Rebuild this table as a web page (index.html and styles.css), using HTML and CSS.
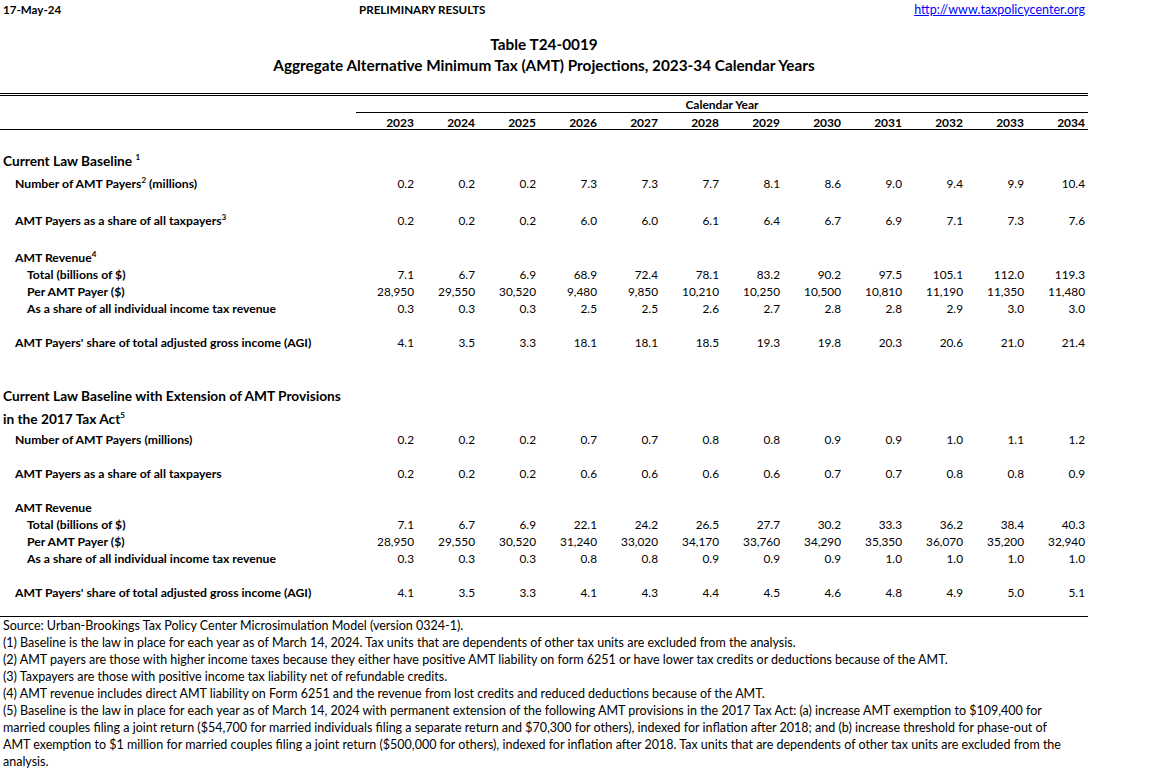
FILE: index.html
```html
<!DOCTYPE html>
<html lang="en">
<head>
<meta charset="utf-8">
<title>Table T24-0019</title>
<link rel="stylesheet" href="styles.css">
</head>
<body>
<div class="page">
  <div class="topbar">
    <div class="tb-date">17-May-24</div>
    <div class="tb-prelim">PRELIMINARY RESULTS</div>
    <a class="tb-url" href="#">http://www.taxpolicycenter.org</a>
  </div>
  <div class="titles">
    <div class="title">Table T24-0019</div>
    <div class="title">Aggregate Alternative Minimum Tax (AMT) Projections, 2023-34 Calendar Years</div>
  </div>

  <div class="thead">
    <div class="row hrow">
      <div class="lab"></div>
      <div class="calyear">Calendar Year</div>
    </div>
    <div class="row hrow years">
      <div class="lab"></div>
      <div class="num">2023</div><div class="num">2024</div><div class="num">2025</div><div class="num">2026</div>
      <div class="num">2027</div><div class="num">2028</div><div class="num">2029</div><div class="num">2030</div>
      <div class="num">2031</div><div class="num">2032</div><div class="num">2033</div><div class="num">2034</div>
    </div>
  </div>

  <div class="tbody">
    <div class="row head1"><div class="lab sec">Current Law Baseline <sup>1</sup></div></div>
    <div class="row drow mt4">
      <div class="lab l1">Number of AMT Payers<sup>2</sup> (millions)</div>
      <div class="num">0.2</div><div class="num">0.2</div><div class="num">0.2</div><div class="num">7.3</div>
      <div class="num">7.3</div><div class="num">7.7</div><div class="num">8.1</div><div class="num">8.6</div>
      <div class="num">9.0</div><div class="num">9.4</div><div class="num">9.9</div><div class="num">10.4</div>
    </div>
    <div class="row drow mt20">
      <div class="lab l1">AMT Payers as a share of all taxpayers<sup>3</sup></div>
      <div class="num">0.2</div><div class="num">0.2</div><div class="num">0.2</div><div class="num">6.0</div>
      <div class="num">6.0</div><div class="num">6.1</div><div class="num">6.4</div><div class="num">6.7</div>
      <div class="num">6.9</div><div class="num">7.1</div><div class="num">7.3</div><div class="num">7.6</div>
    </div>
    <div class="row drow mt20">
      <div class="lab l1">AMT Revenue<sup>4</sup></div>
    </div>
    <div class="row drow">
      <div class="lab l2">Total (billions of $)</div>
      <div class="num">7.1</div><div class="num">6.7</div><div class="num">6.9</div><div class="num">68.9</div>
      <div class="num">72.4</div><div class="num">78.1</div><div class="num">83.2</div><div class="num">90.2</div>
      <div class="num">97.5</div><div class="num">105.1</div><div class="num">112.0</div><div class="num">119.3</div>
    </div>
    <div class="row drow">
      <div class="lab l2">Per AMT Payer ($)</div>
      <div class="num">28,950</div><div class="num">29,550</div><div class="num">30,520</div><div class="num">9,480</div>
      <div class="num">9,850</div><div class="num">10,210</div><div class="num">10,250</div><div class="num">10,500</div>
      <div class="num">10,810</div><div class="num">11,190</div><div class="num">11,350</div><div class="num">11,480</div>
    </div>
    <div class="row drow">
      <div class="lab l2">As a share of all individual income tax revenue</div>
      <div class="num">0.3</div><div class="num">0.3</div><div class="num">0.3</div><div class="num">2.5</div>
      <div class="num">2.5</div><div class="num">2.6</div><div class="num">2.7</div><div class="num">2.8</div>
      <div class="num">2.8</div><div class="num">2.9</div><div class="num">3.0</div><div class="num">3.0</div>
    </div>
    <div class="row drow mt17">
      <div class="lab l1">AMT Payers' share of total adjusted gross income (AGI)</div>
      <div class="num">4.1</div><div class="num">3.5</div><div class="num">3.3</div><div class="num">18.1</div>
      <div class="num">18.1</div><div class="num">18.5</div><div class="num">19.3</div><div class="num">19.8</div>
      <div class="num">20.3</div><div class="num">20.6</div><div class="num">21.0</div><div class="num">21.4</div>
    </div>

    <div class="row head2"><div class="lab sec">Current Law Baseline with Extension of AMT Provisions<br>in the 2017 Tax Act<sup>5</sup></div></div>
    <div class="row drow mt1">
      <div class="lab l1">Number of AMT Payers (millions)</div>
      <div class="num">0.2</div><div class="num">0.2</div><div class="num">0.2</div><div class="num">0.7</div>
      <div class="num">0.7</div><div class="num">0.8</div><div class="num">0.8</div><div class="num">0.9</div>
      <div class="num">0.9</div><div class="num">1.0</div><div class="num">1.1</div><div class="num">1.2</div>
    </div>
    <div class="row drow mt17">
      <div class="lab l1">AMT Payers as a share of all taxpayers</div>
      <div class="num">0.2</div><div class="num">0.2</div><div class="num">0.2</div><div class="num">0.6</div>
      <div class="num">0.6</div><div class="num">0.6</div><div class="num">0.6</div><div class="num">0.7</div>
      <div class="num">0.7</div><div class="num">0.8</div><div class="num">0.8</div><div class="num">0.9</div>
    </div>
    <div class="row drow mt17">
      <div class="lab l1">AMT Revenue</div>
    </div>
    <div class="row drow">
      <div class="lab l2">Total (billions of $)</div>
      <div class="num">7.1</div><div class="num">6.7</div><div class="num">6.9</div><div class="num">22.1</div>
      <div class="num">24.2</div><div class="num">26.5</div><div class="num">27.7</div><div class="num">30.2</div>
      <div class="num">33.3</div><div class="num">36.2</div><div class="num">38.4</div><div class="num">40.3</div>
    </div>
    <div class="row drow">
      <div class="lab l2">Per AMT Payer ($)</div>
      <div class="num">28,950</div><div class="num">29,550</div><div class="num">30,520</div><div class="num">31,240</div>
      <div class="num">33,020</div><div class="num">34,170</div><div class="num">33,760</div><div class="num">34,290</div>
      <div class="num">35,350</div><div class="num">36,070</div><div class="num">35,200</div><div class="num">32,940</div>
    </div>
    <div class="row drow">
      <div class="lab l2">As a share of all individual income tax revenue</div>
      <div class="num">0.3</div><div class="num">0.3</div><div class="num">0.3</div><div class="num">0.8</div>
      <div class="num">0.8</div><div class="num">0.9</div><div class="num">0.9</div><div class="num">0.9</div>
      <div class="num">1.0</div><div class="num">1.0</div><div class="num">1.0</div><div class="num">1.0</div>
    </div>
    <div class="row drow mt17">
      <div class="lab l1">AMT Payers' share of total adjusted gross income (AGI)</div>
      <div class="num">4.1</div><div class="num">3.5</div><div class="num">3.3</div><div class="num">4.1</div>
      <div class="num">4.3</div><div class="num">4.4</div><div class="num">4.5</div><div class="num">4.6</div>
      <div class="num">4.8</div><div class="num">4.9</div><div class="num">5.0</div><div class="num">5.1</div>
    </div>
  </div>

  <div class="notes">
    <p>Source: Urban-Brookings Tax Policy Center Microsimulation Model (version 0324-1).</p>
    <p>(1) Baseline is the law in place for each year as of March 14, 2024. Tax units that are dependents of other tax units are excluded from the analysis.</p>
    <p>(2) AMT payers are those with higher income taxes because they either have positive AMT liability on form 6251 or have lower tax credits or deductions because of the AMT.</p>
    <p>(3) Taxpayers are those with positive income tax liability net of refundable credits.</p>
    <p>(4) AMT revenue includes direct AMT liability on Form 6251 and the revenue from lost credits and reduced deductions because of the AMT.</p>
    <p>(5) Baseline is the law in place for each year as of March 14, 2024 with permanent extension of the following AMT provisions in the 2017 Tax Act: (a) increase AMT exemption to $109,400 for<br>married couples filing a joint return ($54,700 for married individuals filing a separate return and $70,300 for others), indexed for inflation after 2018; and (b) increase threshold for phase-out of<br>AMT exemption to $1 million for married couples filing a joint return ($500,000 for others), indexed for inflation after 2018. Tax units that are dependents of other tax units are excluded from the<br>analysis.</p>
  </div>
</div>
</body>
</html>
```

FILE: styles.css
```css
* { box-sizing: border-box; }
html, body { margin: 0; padding: 0; background: #fff; }
body {
  font-family: Lato, "Open Sans", "Liberation Sans", sans-serif;
  color: #000;
}
.page { width: 1088px; }

.topbar {
  display: grid;
  grid-template-columns: 356px 1fr auto;
  height: 20px;
  line-height: 20px;
  font-size: 11.6px;
}
.tb-date, .tb-prelim { font-weight: 700; padding-left: 3px; }
.tb-url {
  color: #0000ff;
  text-decoration: underline;
  font-weight: 400;
  font-size: 12.5px;
  padding-right: 3px;
}

.titles { margin-top: 14px; text-align: center; }
.title { font-weight: 700; font-size: 15.3px; line-height: 21px; }

.thead {
  margin-top: 17px;
  border-top: 3px double #000;
  border-bottom: 1px solid #000;
}
.row {
  display: grid;
  grid-template-columns: 356px repeat(12, 61px);
  align-items: center;
}
.hrow { height: 16px; font-weight: 700; font-size: 12px; }
.hrow:first-child { height: 17px; }
.hrow.years { padding-top: 2px; }
.calyear {
  grid-column: 2 / span 12;
  text-align: center;
  border-bottom: 1px solid #000;
  height: 17px;
  line-height: 17px;
  align-self: stretch;
}
.num {
  text-align: right;
  padding-right: 3px;
  white-space: nowrap;
}

.tbody {
  border-bottom: 1px solid #000;
  padding-bottom: 15px;
  font-size: 11.8px;
}
.drow { height: 17px; line-height: 17px; }
.drow .lab { font-weight: 700; white-space: nowrap; font-size: 12.2px; }
.lab.l1 { padding-left: 15px; }
.lab.l2 { padding-left: 27px; }
.lab.sec { padding-left: 3px; font-weight: 700; font-size: 13.7px; white-space: nowrap; }
.head1 { margin-top: 22px; height: 18px; line-height: 18px; }
.head2 { margin-top: 33px; line-height: 23px; }
.mt1 { margin-top: 1px; }
.mt4 { margin-top: 5px; }
.mt17 { margin-top: 17px; }
.mt20 { margin-top: 20px; }

sup {
  font-size: 8px;
  line-height: 0;
  vertical-align: 5px;
}
.sec sup { vertical-align: 6px; }

.notes { font-size: 12.5px; line-height: 17px; padding-left: 3px; }
.notes p { margin: 0; white-space: nowrap; }
```
